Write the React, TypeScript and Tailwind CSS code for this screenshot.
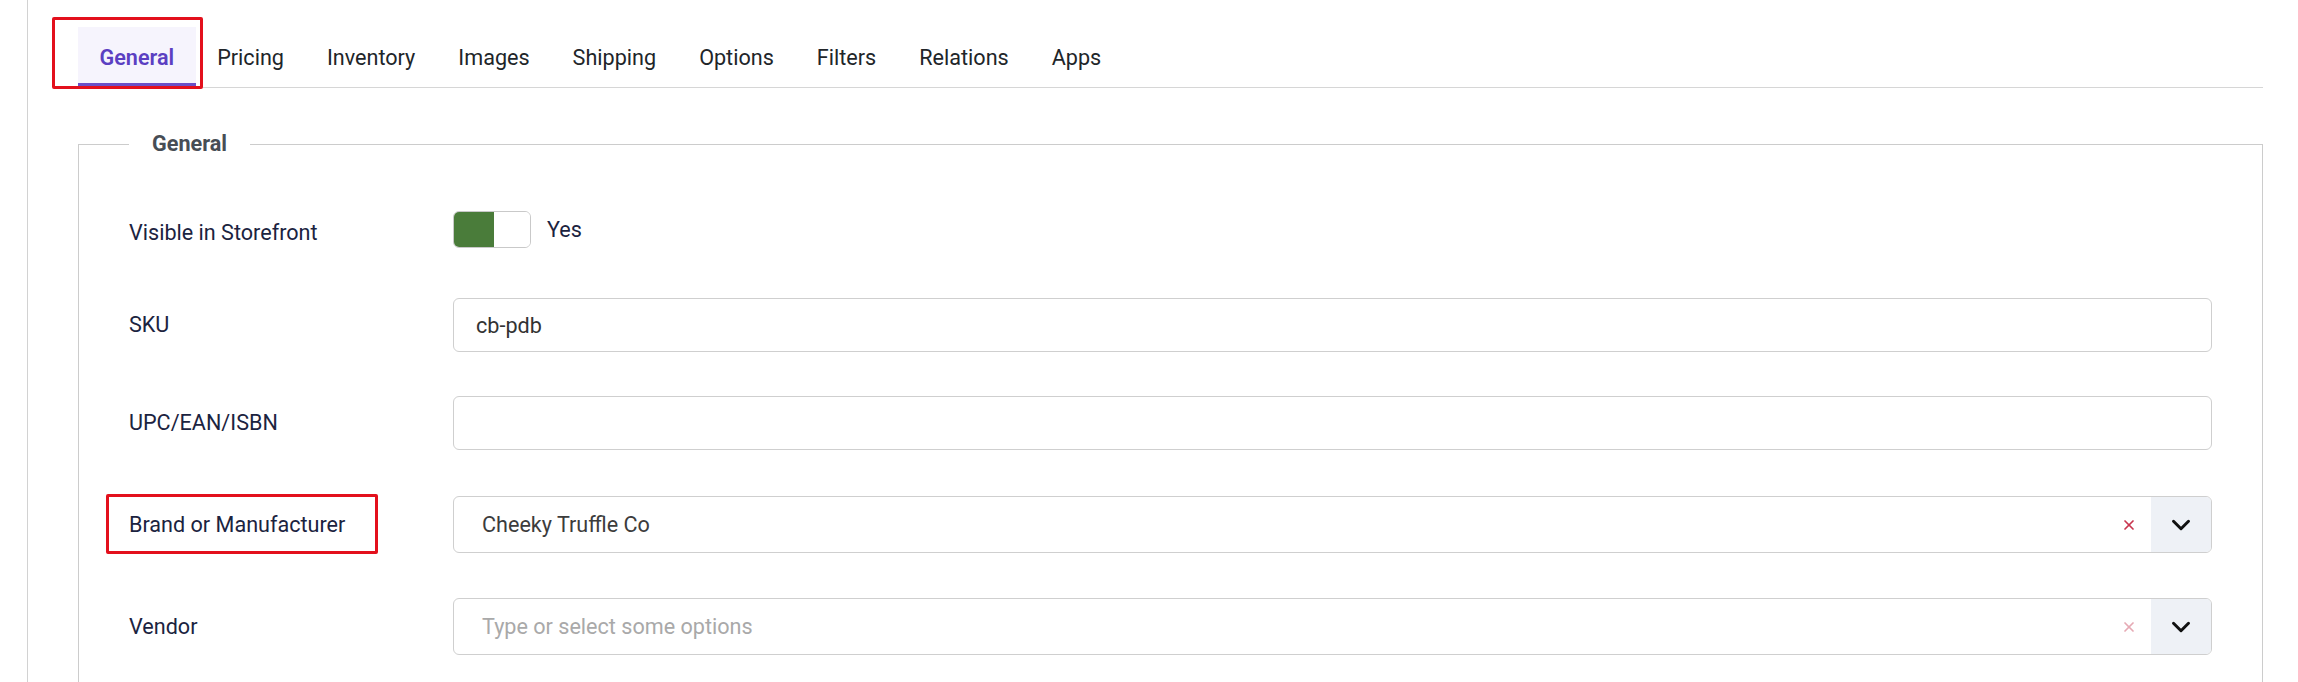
import { ChevronDown, X } from "lucide-react";

const tabs = [
  "General",
  "Pricing",
  "Inventory",
  "Images",
  "Shipping",
  "Options",
  "Filters",
  "Relations",
  "Apps",
];

function Highlight({ className }: { className: string }) {
  return (
    <span
      className={`pointer-events-none absolute rounded-[2px] border-[3px] border-[#e3101c] ${className}`}
    />
  );
}

function Toggle({ on }: { on: boolean }) {
  return (
    <div className="flex items-center gap-[16px]">
      <div className="flex h-[37px] w-[78px] overflow-hidden rounded-[6px] border border-[#c9c9c9]">
        <div className={`w-[40px] ${on ? "bg-[#4a7c3a]" : "bg-white"}`} />
        <div className="flex-1 bg-white" />
      </div>
      <span className="text-[#1b2340]">{on ? "Yes" : "No"}</span>
    </div>
  );
}

function TextInput({ value }: { value?: string }) {
  return (
    <input
      readOnly
      defaultValue={value}
      className="h-[54px] w-full rounded-[6px] border border-[#cfcfcf] bg-white px-[22px] text-[21.6px] text-[#333] outline-none"
    />
  );
}

function Select({ value, placeholder }: { value?: string; placeholder?: string }) {
  return (
    <div className="flex h-[57px] w-full overflow-hidden rounded-[6px] border border-[#cfcfcf] bg-white">
      <div className="flex flex-1 items-center pl-[28px]">
        {value ? (
          <span className="text-[#3c3c3c]">{value}</span>
        ) : (
          <span className="text-[#a9a9a9]">{placeholder}</span>
        )}
      </div>
      <div className="flex items-center pr-[14px]">
        <X
          className={`h-[16px] w-[16px] ${value ? "text-[#c8364f]" : "text-[#e6aab4]"}`}
          strokeWidth={2.6}
        />
      </div>
      <div className="flex w-[60px] items-center justify-center bg-[#eef1f6]">
        <ChevronDown className="h-[30px] w-[30px] text-[#111]" strokeWidth={2.4} />
      </div>
    </div>
  );
}

function Row({
  label,
  children,
  className = "",
  labelClass = "",
}: {
  label: React.ReactNode;
  children: React.ReactNode;
  className?: string;
  labelClass?: string;
}) {
  return (
    <div className={`flex items-center ${className}`}>
      <div className={`w-[324px] shrink-0 text-[#1b2340] ${labelClass}`}>{label}</div>
      <div className="flex-1">{children}</div>
    </div>
  );
}

export default function App() {
  return (
    <div className="flex min-h-[682px] bg-white font-['Roboto',sans-serif] text-[21.6px] leading-[32px]">
      <div className="w-[27px] shrink-0" />
      <main className="flex-1 border-l border-[#d2d2d2] pl-[50px] pr-[35px] pt-[27px]">
        {/* Tabs */}
        <nav className="flex border-b border-[#d6d6d6]">
          {tabs.map((tab, i) => {
            const active = i === 0;
            return (
              <button
                key={tab}
                className={`relative flex h-[60px] items-center border-b-4 px-[21.5px] pt-[6px] ${
                  active
                    ? "border-[#6a50c8] bg-[#f6f4fd] font-semibold text-[#5b3fc2]"
                    : "border-transparent text-[#212529]"
                }`}
              >
                {tab}
                {active && <Highlight className="-left-[26px] -right-[7px] -top-[10px] -bottom-[6px]" />}
              </button>
            );
          })}
        </nav>

        {/* General fieldset */}
        <fieldset className="mt-[40px] border border-[#cccccc] px-[50px] pb-[80px]">
          <legend className="px-[23px] font-bold text-[#474d55]">General</legend>
          <div className="flex flex-col pt-[50px]">
            <Row label="Visible in Storefront" labelClass="mt-[7px]">
              <Toggle on />
            </Row>
            <Row label="SKU" className="mt-[49px]">
              <TextInput value="cb-pdb" />
            </Row>
            <Row label="UPC/EAN/ISBN" className="mt-[44px]">
              <TextInput />
            </Row>
            <Row
              label={
                <span className="relative">
                  Brand or Manufacturer
                  <Highlight className="-left-[23px] -right-[33px] -top-[18px] -bottom-[17px]" />
                </span>
              }
              className="mt-[46px]"
            >
              <Select value="Cheeky Truffle Co" />
            </Row>
            <Row label="Vendor" className="mt-[45px]">
              <Select placeholder="Type or select some options" />
            </Row>
          </div>
        </fieldset>
      </main>
    </div>
  );
}
